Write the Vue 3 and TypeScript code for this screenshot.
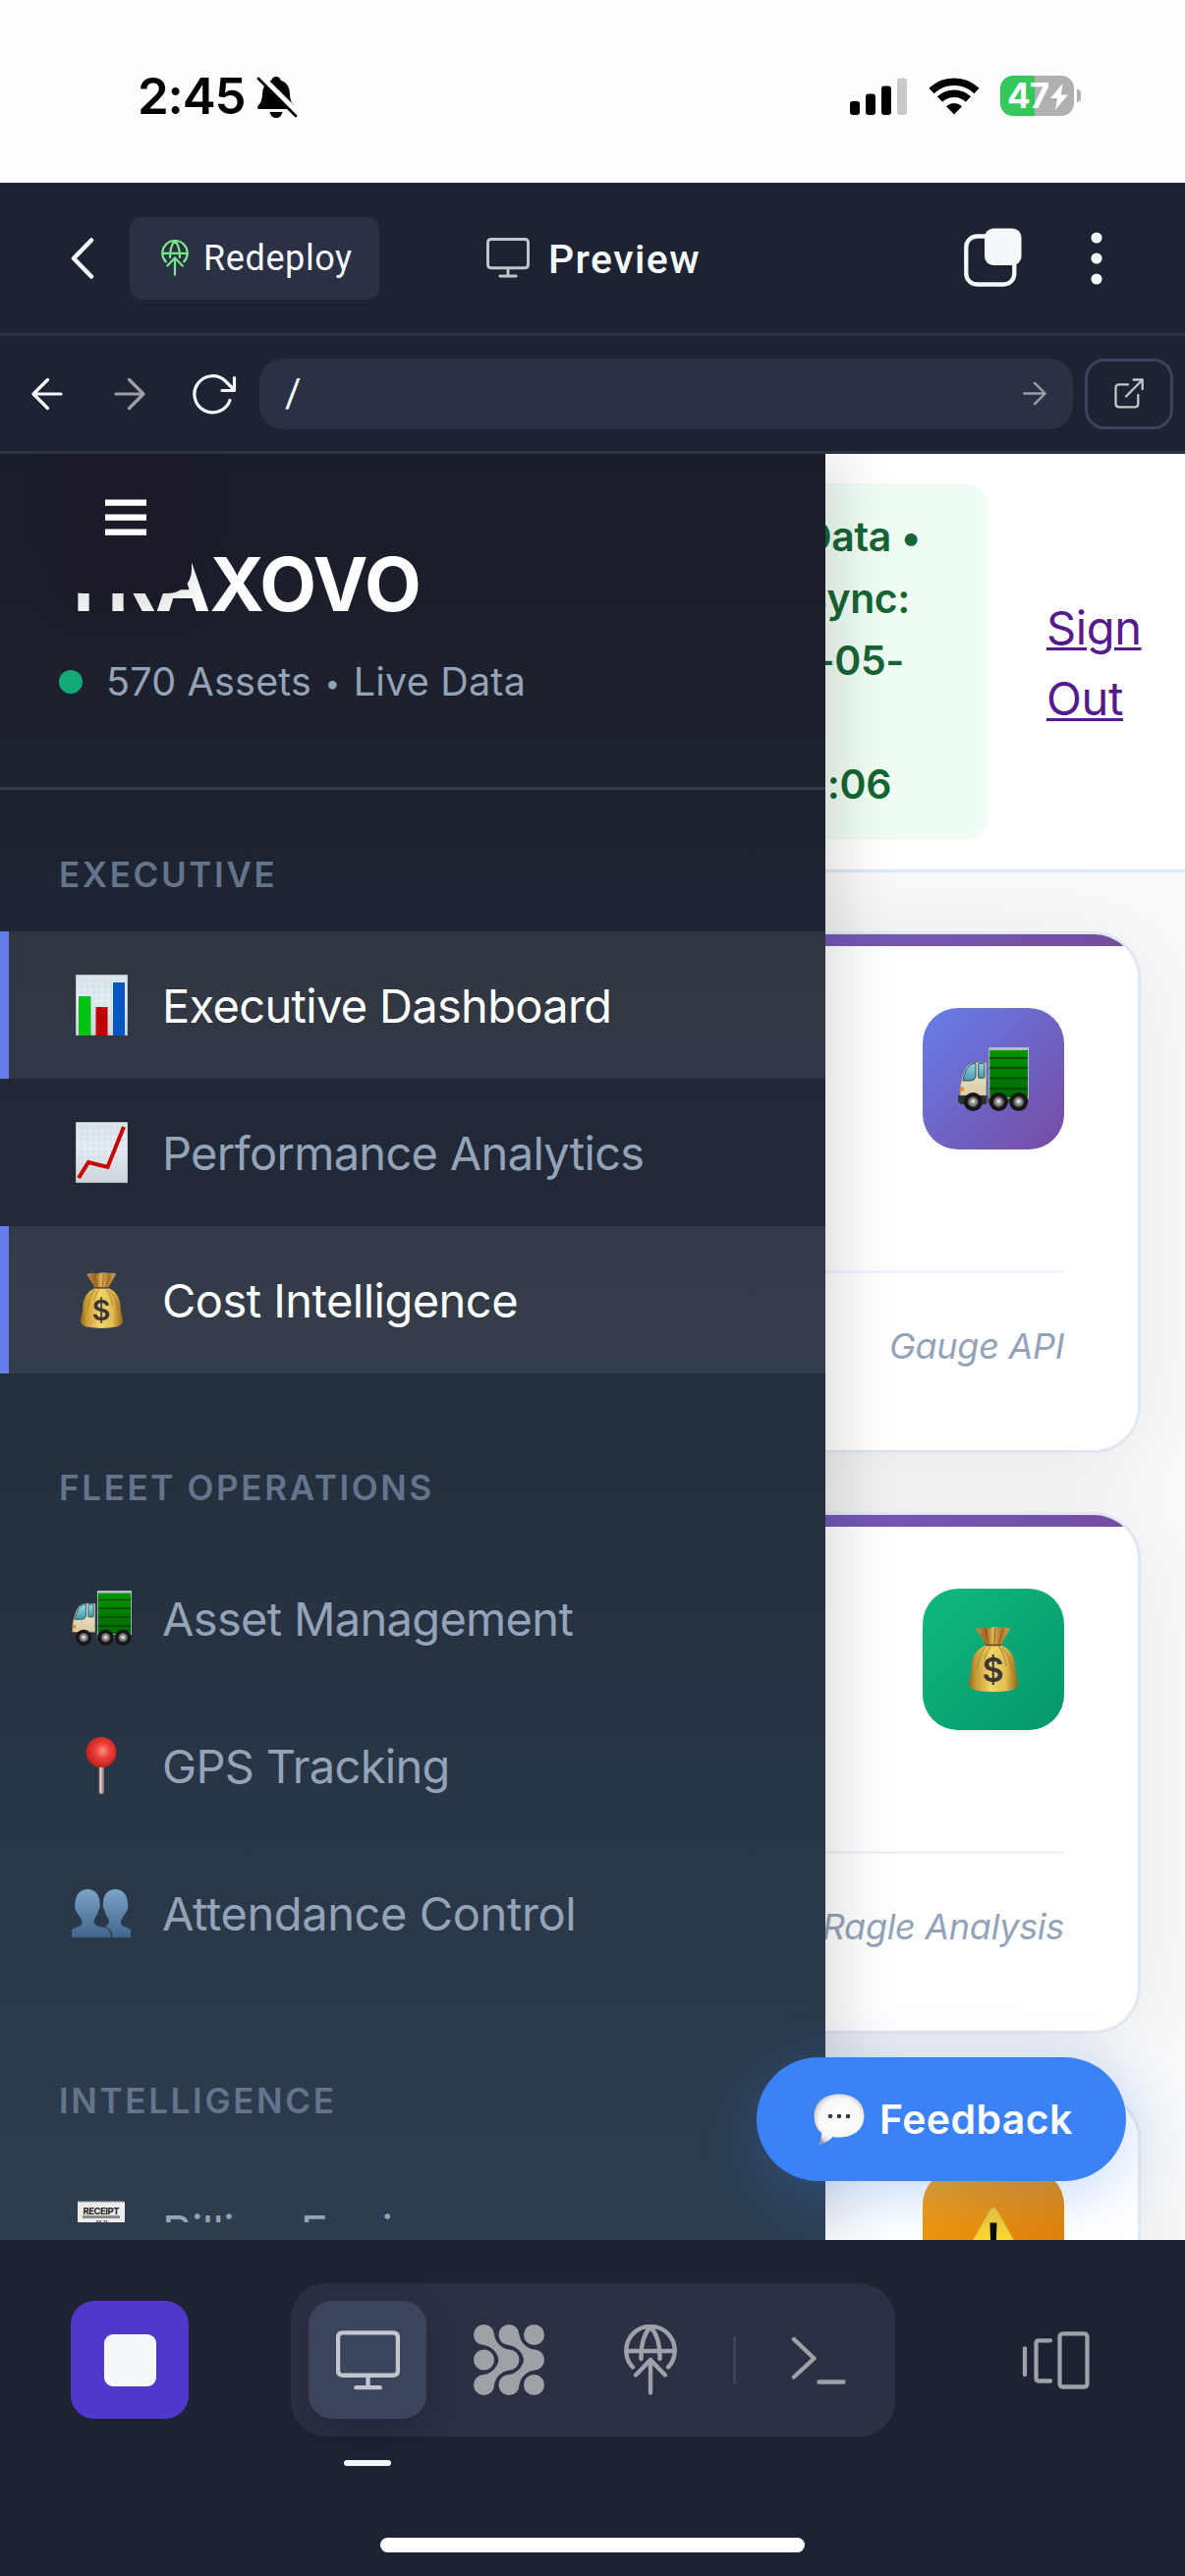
<script setup lang="ts">
interface NavItem {
  label: string
  icon: string
  w: number
  h: number
  tracking: number
  active?: boolean
}
interface NavSection {
  title: string
  items: NavItem[]
}
interface Card {
  icon: string
  tone: string
  source: string
  w: number
  h: number
}

const sections: NavSection[] = [
  {
    title: 'EXECUTIVE',
    items: [
      { label: 'Executive Dashboard', icon: 'bars', w: 53, h: 62, tracking: -0.68, active: true },
      { label: 'Performance Analytics', icon: 'trend', w: 53, h: 62, tracking: -0.68 },
      { label: 'Cost Intelligence', icon: 'bag', w: 43, h: 57, tracking: -0.53, active: true },
    ],
  },
  {
    title: 'FLEET OPERATIONS',
    items: [
      { label: 'Asset Management', icon: 'truck', w: 62, h: 56, tracking: -0.68 },
      { label: 'GPS Tracking', icon: 'pin', w: 32, h: 58, tracking: -0.68 },
      { label: 'Attendance Control', icon: 'people', w: 60, h: 49, tracking: -0.4 },
    ],
  },
  {
    title: 'INTELLIGENCE',
    items: [{ label: 'Billing Engine', icon: 'receipt', w: 48, h: 62, tracking: -0.68 }],
  },
]

const cards: Card[] = [
  { icon: 'truck', tone: 'violet', source: 'Gauge API', w: 72, h: 65 },
  { icon: 'bag', tone: 'green', source: 'Ragle Analysis', w: 50, h: 66 },
  { icon: 'warning', tone: 'amber', source: '', w: 74, h: 66 },
]

// Remaining room on the right of each wrapped line
const syncLines = [
  { text: 'Data •', rest: 68 },
  { text: 'Sync:', rest: 79 },
  { text: '-05-', rest: 85 },
  { text: '', rest: 0 },
  { text: ':06', rest: 98 },
]
</script>

<template>
  <div class="screen">
    <svg class="sprite" width="0" height="0" aria-hidden="true">
      <defs>
        <linearGradient id="gPaper" x1="0" y1="0" x2="0" y2="1">
          <stop offset="0" stop-color="#dbe3e8" /><stop offset=".4" stop-color="#e6eff5" /><stop offset="1" stop-color="#cfd3d7" />
        </linearGradient>
        <linearGradient id="gBag" x1="0" y1="0" x2="1" y2="0">
          <stop offset="0" stop-color="#8f651c" /><stop offset=".14" stop-color="#c79a35" /><stop offset=".45" stop-color="#f2d768" /><stop offset=".75" stop-color="#e3bd50" /><stop offset="1" stop-color="#936418" />
        </linearGradient>
        <linearGradient id="gNeck" x1="0" y1="0" x2="1" y2="0">
          <stop offset="0" stop-color="#b98d4a" /><stop offset=".3" stop-color="#a06a20" /><stop offset=".5" stop-color="#dcb25c" /><stop offset=".75" stop-color="#b07a2a" /><stop offset="1" stop-color="#c9a25d" />
        </linearGradient>
        <linearGradient id="gBox" x1="0" y1="0" x2="0" y2="1">
          <stop offset="0" stop-color="#009400" /><stop offset="1" stop-color="#006800" />
        </linearGradient>
        <linearGradient id="gCab" x1="0" y1="0" x2="0" y2="1">
          <stop offset="0" stop-color="#f0e9d2" /><stop offset="1" stop-color="#d8cba4" />
        </linearGradient>
        <linearGradient id="gGlass" x1="0" y1="0" x2="0" y2="1">
          <stop offset="0" stop-color="#8fdbe8" /><stop offset="1" stop-color="#4797ab" />
        </linearGradient>
        <radialGradient id="gBall" cx=".55" cy=".45" r=".6">
          <stop offset="0" stop-color="#ff8f80" /><stop offset=".4" stop-color="#ee4038" /><stop offset="1" stop-color="#b81a1a" />
        </radialGradient>
        <linearGradient id="gPeople" x1="0" y1="0" x2="0" y2="1">
          <stop offset="0" stop-color="#7ba4c6" /><stop offset="1" stop-color="#42658d" />
        </linearGradient>
        <radialGradient id="gBubble" cx=".52" cy=".5" r=".56">
          <stop offset="0" stop-color="#fff" /><stop offset=".75" stop-color="#f8f8f8" /><stop offset=".93" stop-color="#d2d2d2" /><stop offset="1" stop-color="#9c9c9c" />
        </radialGradient>
        <linearGradient id="gWarn" x1="0" y1="0" x2="0" y2="1">
          <stop offset="0" stop-color="#eec63c" /><stop offset=".5" stop-color="#fdd92c" /><stop offset="1" stop-color="#fcd01c" />
        </linearGradient>
      </defs>

      <symbol id="bars" viewBox="0 0 53 62">
        <rect width="53" height="62" fill="url(#gPaper)" stroke="#98a0a6" stroke-width="1" />
        <path d="M0 6H53M0 12H53M0 18H53M0 24H53M0 30H53M0 36H53M0 42H53M0 48H53M6 0V62M12 0V62M18 0V62M24 0V62M30 0V62M36 0V62M42 0V62M48 0V62" stroke="#c6dbe9" stroke-width=".6" />
        <rect x="3" y="22" width="12.5" height="40" fill="#06c313" />
        <rect x="20.5" y="33" width="12" height="29" fill="#be0000" />
        <rect x="38" y="8" width="12" height="54" fill="#0657c2" />
      </symbol>

      <symbol id="trend" viewBox="0 0 53 62">
        <rect width="53" height="62" fill="url(#gPaper)" stroke="#98a0a6" stroke-width="1" />
        <path d="M0 6H53M0 12H53M0 18H53M0 24H53M0 30H53M0 36H53M0 42H53M0 48H53M6 0V62M12 0V62M18 0V62M24 0V62M30 0V62M36 0V62M42 0V62M48 0V62" stroke="#c6dbe9" stroke-width=".6" />
        <path d="M3 57L13 41L32.5 46L49 5" fill="none" stroke="#c90000" stroke-width="4" />
      </symbol>

      <symbol id="bag" viewBox="0 0 50 66">
        <path d="M7 2Q14 0 20 1.5Q26 -1 34 .8Q38 0 42 2L33 18H17Z" fill="url(#gNeck)" />
        <path d="M17 2L20.500 17M27 1L26 17M35 2L30 17" stroke="#7a4c14" stroke-width="1" opacity=".7" />
        <path d="M17 18.500H33Q45 24 47 36Q47 46 50 56Q51 61 43 64.500Q25 67.500 7 64.500Q-1 61 0 56Q3 46 3 36Q5 24 17 18.500Z" fill="url(#gBag)" />
        <path d="M17 18.500H33" stroke="#5b3a12" stroke-width="1.400" />
        <path d="M17 20Q10 30 8 44M22 20Q17 27 16 33M31 20Q37 30 38 40M34 21Q42 30 44 46" fill="none" stroke="#a9792a" stroke-width="1.500" opacity=".6" />
      </symbol>

      <symbol id="truck" viewBox="0 0 72 65">
        <rect x="30" y="49" width="41" height="8" fill="#444a4c" />
        <rect x="31.300" y="0" width="40.700" height="52" fill="#b4bcc8" />
        <rect x="32.300" y="3" width="38.700" height="48" fill="url(#gBox)" />
        <path d="M32.300 11H71M32.300 21H71M32.300 31.500H71M32.300 42H71" stroke="#033b05" stroke-width="1.300" />
        <path d="M28.800 15.500H17Q9 16 5.500 27L2.500 38L2 50H28.800Z" fill="url(#gCab)" stroke="#8b8876" stroke-width=".7" />
        <path d="M5 34Q8 18 16 16.300H18V30Q17 34 13 34Z" fill="url(#gGlass)" stroke="#2c4f5b" stroke-width="1" />
        <rect x="20.700" y="16.300" width="6.200" height="15" rx="1" fill="url(#gGlass)" stroke="#2c4f5b" stroke-width="1" />
        <circle cx="4.200" cy="42.500" r="2.200" fill="#f28a12" />
        <path d="M0 49H29V58H4Q0 57 0 54Z" fill="#2f3234" />
        <g fill="#161616">
          <circle cx="15.300" cy="55.500" r="9.500" /><circle cx="41.300" cy="55.500" r="9.500" /><circle cx="61.700" cy="55.500" r="9.500" />
        </g>
        <g fill="#8c8c8e" stroke="#4a4a4c" stroke-width="1.300">
          <circle cx="15.300" cy="55.500" r="5" /><circle cx="41.300" cy="55.500" r="5" /><circle cx="61.700" cy="55.500" r="5" />
        </g>
        <g fill="#dcdcdc">
          <circle cx="15.300" cy="55" r="2" /><circle cx="41.300" cy="55" r="2" /><circle cx="61.700" cy="55" r="2" />
        </g>
      </symbol>

      <symbol id="pin" viewBox="0 0 32 58">
        <rect x="13.700" y="26" width="5" height="32" rx="2" fill="#a98f88" />
        <rect x="14.700" y="28" width="1.600" height="29" fill="#e6d3cc" />
        <circle cx="16" cy="15.500" r="15.500" fill="url(#gBall)" />
      </symbol>

      <symbol id="people" viewBox="0 0 60 49">
        <g fill="url(#gPeople)">
          <path d="M16 0C24 0 28.500 6 28.500 14C29.500 17 28 20 27 22C26 27 23 29 22.500 32C22.500 37 28 38 31 38.500C37 39.500 40 42 40 49H0V42C1 38.500 9 39 10.500 35C11 31 8 28 5.500 24C3 20 3 18 3.500 14C4 5 9 0 16 0Z" />
          <path d="M44.500 0C36.500 0 32 6 32 14C31 17 32.500 20 33.500 22C34.500 27 37.500 29 38 32C38 35 36 37 33.500 38.300C38 39.500 41.500 42 41.500 49H60V42C59.500 38.500 51.500 39 50 35C49.500 31 52.500 28 55 24C57.500 20 57.500 18 57 14C56.500 5 51.500 0 44.500 0Z" />
        </g>
      </symbol>

      <symbol id="receipt" viewBox="0 0 48 62">
        <path d="M0 1H48V62H0Z" fill="#ececec" />
        <path d="M0 1H48" stroke="#9a9a9a" stroke-width="2" stroke-dasharray="1.500 1.500" />
        <rect x="5" y="15" width="38" height="3" fill="#8c8c8c" />
      </symbol>

      <symbol id="warning" viewBox="0 0 74 66">
        <path d="M33 3Q37 -3 41 3L73 60Q75 66 69 66H5Q-1 66 1 60Z" fill="url(#gWarn)" stroke="#e0a52e" stroke-width="1" />
        <path d="M33.500 15.500H40.500L39.500 45H34.500Z" fill="#0a0a06" />
        <circle cx="37" cy="54" r="4" fill="#0a0a06" />
      </symbol>

      <symbol id="monitor" viewBox="0 0 64 60">
        <path d="M7 2.300H57Q62 2.300 62 7.300V40Q62 45 57 45H7Q2 45 2 40V7.300Q2 2.300 7 2.300ZM32 45V57M20 57.200H44" fill="none" stroke="currentColor" stroke-width="4.300" stroke-linecap="round" />
      </symbol>

      <symbol id="deploy" viewBox="0 0 54 72">
        <g fill="none" stroke="currentColor" stroke-width="4.400" stroke-linecap="round" stroke-linejoin="round">
          <path d="M9 43.500A24.700 24.700 0 1 1 45 43.500" />
          <path d="M2.500 27H51.500" />
          <path d="M27 2.500Q17 13 17.500 35M27 2.500Q37 13 36.500 35" />
          <path d="M27 36V69.500M12 51.500L27 36L42 51.500" />
        </g>
      </symbol>
    </svg>

    <div class="status">
      <div class="status-left">
        <span class="clock">2:45</span>
        <svg width="42" height="44" viewBox="0 0 42 44">
          <path d="M20 1Q24 1 24.500 4.500Q34 8 34 19Q34 26 38.500 31Q40 34 37 34H3Q0 34 1.500 31Q6 26 6 19Q6 8 15.500 4.500Q16 1 20 1Z" fill="#000" />
          <path d="M13.500 37H26.500Q25 43 20 43Q15 43 13.500 37Z" fill="#000" />
          <path d="M4 1L43 40" stroke="#fdfdfd" stroke-width="7" />
          <path d="M2 3L40 41" stroke="#000" stroke-width="2.800" stroke-linecap="round" />
        </svg>
      </div>
      <div class="status-right">
        <svg width="58" height="38" viewBox="0 0 58 38">
          <rect x="0" y="24" width="10" height="14" rx="3" /><rect x="16" y="16.500" width="10" height="21.500" rx="3" />
          <rect x="32" y="8.500" width="10" height="29.500" rx="3" /><rect x="48" y="0.500" width="10" height="37.500" rx="3" fill="#c9c9c9" />
        </svg>
        <svg class="wifi" width="52" height="38" viewBox="0 0 52 38">
          <g fill="none" stroke="#000" stroke-width="7.500">
            <path d="M3 13.500A33 33 0 0 1 49 13.500" /><path d="M11.500 22A21 21 0 0 1 40.500 22" />
          </g>
          <path d="M26 37.500L18 29.300Q26 22.500 34 29.300Z" />
        </svg>
        <div class="battery">
          <span>47</span>
          <svg width="18" height="27" viewBox="0 0 18 27"><path d="M12.500 0L0 15H7L5 27L18 11.500H11Z" fill="#fff" /></svg>
        </div>
        <i class="nub"></i>
      </div>
    </div>

    <header class="toolbar">
      <svg class="back" width="24" height="42" viewBox="0 0 24 42"><path d="M21 2.500L3 21L21 39.500" fill="none" stroke="#f5f9fc" stroke-width="4.500" stroke-linecap="round" stroke-linejoin="round" /></svg>
      <div class="redeploy">
        <svg width="28" height="37"><use href="#deploy" /></svg>
        <span>Redeploy</span>
      </div>
      <div class="title">
        <svg width="44" height="41"><use href="#monitor" /></svg>
        <span>Preview</span>
      </div>
      <svg class="copy" width="59" height="60" viewBox="0 0 59 60">
        <rect x="2.300" y="8.500" width="49" height="49" rx="11" fill="none" stroke="#f5f9fc" stroke-width="4.300" />
        <rect x="21" y="0.500" width="37.500" height="37.500" rx="9" fill="#f5f9fc" />
      </svg>
      <svg class="dots" width="12" height="54" viewBox="0 0 12 54" fill="#f5f9fc"><circle cx="6" cy="6" r="5.600" /><circle cx="6" cy="27" r="5.600" /><circle cx="6" cy="48" r="5.600" /></svg>
    </header>

    <div class="urlbar">
      <svg class="nav-back" width="32" height="34" viewBox="0 0 32 34"><path d="M30 17H2.500M16.500 2.500L2 17L16.500 31.500" fill="none" stroke="#f5f9fc" stroke-width="3.200" stroke-linecap="round" stroke-linejoin="round" /></svg>
      <svg class="nav-fwd" width="32" height="34" viewBox="0 0 32 34"><path d="M2 17H29.500M15.500 2.500L30 17L15.500 31.500" fill="none" stroke="#9c9fa3" stroke-width="3.200" stroke-linecap="round" stroke-linejoin="round" /></svg>
      <svg class="reload" width="46" height="42" viewBox="0 0 46 42"><path d="M38 27.500A18.600 18.600 0 1 1 33.500 8L42.500 17M42.500 4.500V17.500H30" fill="none" stroke="#f5f9fc" stroke-width="3.200" stroke-linecap="round" stroke-linejoin="round" /></svg>
      <div class="address">
        <span>/</span>
        <svg width="24" height="25" viewBox="0 0 24 25"><path d="M1.300 12.500H22M12 1.800L22.700 12.500L12 23.200" fill="none" stroke="#9c9fa3" stroke-width="2.400" stroke-linecap="round" stroke-linejoin="round" /></svg>
      </div>
      <div class="external">
        <svg width="30" height="31" viewBox="0 0 30 31"><path d="M14 6.300H5Q1.500 6.300 1.500 9.800V26Q1.500 29.300 5 29.300H21Q24.300 29.300 24.300 26V17M12 18.500L28.500 1.800M19.500 1.500H28.700V11" fill="none" stroke="#c3c7cb" stroke-width="2.300" stroke-linecap="round" stroke-linejoin="round" /></svg>
      </div>
    </div>

    <main class="stage">
      <div class="page-head">
        <div class="sync">
          <p v-for="(line, i) in syncLines" :key="i" :style="{ paddingRight: line.rest + 'px' }">{{ line.text }}</p>
        </div>
        <a class="signout">Sign<br>Out</a>
      </div>
      <div class="cards">
        <section v-for="card in cards" :key="card.icon" class="card">
          <div class="card-bar"></div>
          <div class="card-body">
            <div class="card-icon" :class="card.tone">
              <svg :width="card.w" :height="card.h">
                <use :href="'#' + card.icon" />
                <text v-if="card.icon === 'bag'" class="dollar" x="24.5" y="56" font-size="34">$</text>
              </svg>
            </div>
            <div class="card-foot">{{ card.source }}</div>
          </div>
        </section>
      </div>

      <aside class="sidebar">
        <div class="brand">
          <h1>TRAXOVO</h1>
          <div class="live"><i></i><span>570 Assets <b>•</b> Live Data</span></div>
        </div>
        <nav>
          <div v-for="section in sections" :key="section.title" class="section">
            <h2>{{ section.title }}</h2>
            <div v-for="item in section.items" :key="item.label" class="item" :class="{ active: item.active }">
              <span class="item-icon">
                <svg :width="item.w" :height="item.h">
                  <use :href="'#' + item.icon" />
                  <text v-if="item.icon === 'bag'" class="dollar" x="21" y="48.5" font-size="29">$</text>
                  <template v-if="item.icon === 'receipt'">
                    <text class="print" x="24" y="13.5" font-size="9.5" textLength="37">RECEIPT</text>
                    <text class="print" x="24" y="22.5" font-size="4">JUL 17</text>
                  </template>
                </svg>
              </span>
              <span class="item-label" :style="{ letterSpacing: item.tracking + 'px' }">{{ item.label }}</span>
            </div>
          </div>
        </nav>
        <div class="toggle">
          <svg width="42" height="38" viewBox="0 0 42 38" fill="#fff"><rect y="0.500" width="42" height="6.300" /><rect y="15.500" width="42" height="6.300" /><rect y="30.500" width="42" height="6.300" /></svg>
        </div>
      </aside>

      <div class="feedback">
        <svg width="52" height="53" viewBox="0 0 52 53">
          <path d="M26 .5C42 .5 51.500 10 51.500 22.500C51.500 36 41 44.500 26 44.500Q22 44.500 19.500 44Q14 50 4.500 52.500Q8.500 47 8 40Q.5 34 .5 22.500C.5 10 10 .5 26 .5Z" fill="url(#gBubble)" />
          <g fill="#3c3c3c"><circle cx="17" cy="23" r="2.300" /><circle cx="26" cy="23" r="2.300" /><circle cx="35" cy="23" r="2.300" /></g>
        </svg>
        <span>Feedback</span>
      </div>
    </main>

    <footer class="dock">
      <div class="dock-row">
        <div class="stop"><i></i></div>
        <div class="tabs">
          <div class="tab current"><svg width="65" height="61"><use href="#monitor" /></svg></div>
          <div class="tab">
            <svg width="72" height="72" viewBox="0 0 72 72" fill="#9ea2a6">
              <circle cx="10.500" cy="10.500" r="10.500" /><circle cx="36" cy="10.500" r="10.500" /><circle cx="61.500" cy="10.500" r="10.500" />
              <circle cx="10.500" cy="36" r="10.500" /><circle cx="36" cy="36" r="10.500" /><circle cx="61.500" cy="36" r="10.500" />
              <circle cx="10.500" cy="61.500" r="10.500" /><circle cx="36" cy="61.500" r="10.500" /><circle cx="61.500" cy="61.500" r="10.500" />
              <path d="M21 10.500A18 18 0 0 0 36 25.500L25.500 36A18 18 0 0 0 10.500 21Z" />
              <path d="M46.500 10.500A18 18 0 0 0 61.500 25.500L51 36A18 18 0 0 0 36 21Z" />
              <path d="M21 61.500A18 18 0 0 1 36 46.500L25.500 36A18 18 0 0 1 10.500 51Z" />
              <path d="M46.500 61.500A18 18 0 0 1 61.500 46.500L51 36A18 18 0 0 1 36 51Z" />
            </svg>
          </div>
          <div class="tab"><svg width="54" height="72"><use href="#deploy" /></svg></div>
          <i class="sep"></i>
          <div class="tab term"><svg width="56" height="50" viewBox="0 0 56 50"><path d="M3 3L23.500 22.500L3 41.500M28.500 46.500H53.500" fill="none" stroke="#9ea2a6" stroke-width="4.400" stroke-linecap="round" stroke-linejoin="round" /></svg></div>
        </div>
        <svg class="panes" width="69" height="59" viewBox="0 0 69 59">
          <path d="M3 17.500V44M29 9.300H17Q14.500 9.300 14.500 12V47.500Q14.500 50.500 17 50.500H29M42 2.300H63Q66.500 2.300 66.500 5.800V53Q66.500 56.500 63 56.500H42Q38.500 56.500 38.500 53V5.800Q38.500 2.300 42 2.300Z" fill="none" stroke="#9ea2a6" stroke-width="4.300" stroke-linecap="round" />
        </svg>
      </div>
      <i class="marker"></i>
      <i class="home"></i>
    </footer>
  </div>
</template>

<style>
body { margin: 0; background: #1d2332; }
</style>

<style scoped>
* { box-sizing: border-box; }
svg { display: block; flex: none; }
.sprite { position: absolute; }
h1, h2, p { margin: 0; }
.screen { position: relative; width: 1206px; height: 2622px; display: flex; flex-direction: column; overflow: hidden; background: #1d2332; font-family: Inter, "Noto Sans", sans-serif; }
.dollar { font-family: Inter, sans-serif; font-weight: 600; text-anchor: middle; fill: #3d3538; }
.print { font-family: Inter, sans-serif; font-weight: 700; text-anchor: middle; fill: #222; }

.status { height: 186px; flex: none; background: #fdfdfd; display: flex; justify-content: space-between; padding: 77px 106px 0 140px; }
.status-left, .status-right { display: flex; height: 43px; }
.clock { font-size: 51px; font-weight: 600; line-height: 42px; letter-spacing: -1.2px; width: 121px; color: #000; }
.status-right svg { margin-top: 1.500px; }
.status-right .wifi { margin-left: 22px; margin-right: 21px; }
.battery { width: 75px; height: 41px; border-radius: 13px; background: linear-gradient(90deg, #34c759 0 35px, #b0b0b0 35px); display: flex; align-items: center; padding-left: 7px; color: #fff; font-weight: 700; font-size: 35px; letter-spacing: -0.8px; line-height: 41px; }
.battery span { width: 44px; }
.status-right .battery svg { margin-top: 1px; }
.nub { width: 4px; height: 13px; margin: 14px 0 0 3px; border-radius: 0 4px 4px 0; background: #b0b0b0; }

.toolbar { height: 156px; flex: none; border-bottom: 3px solid #2b3245; display: flex; align-items: center; color: #f5f9fc; font-family: Roboto, "Noto Sans", sans-serif; }
.back { margin-left: 72px; }
.redeploy { width: 254px; height: 84px; margin-left: 36px; border-radius: 12px; background: #2b3044; display: flex; align-items: center; padding-left: 32px; font-size: 36px; letter-spacing: 0.6px; }
.redeploy svg { color: #76e78a; margin-right: 15px; }
.title { width: 486px; margin-left: 109px; display: flex; align-items: center; font-size: 41px; font-weight: 500; letter-spacing: 1.4px; }
.title svg { color: #c3c7cb; margin-right: 19px; }
.title span { padding-top: 2px; }
.copy { margin-top: -1px; }
.dots { margin-left: 70px; }

.urlbar { height: 120px; flex: none; border-bottom: 3px solid #2b3245; display: flex; align-items: center; }
.nav-back { margin-left: 32px; }
.nav-fwd { margin-left: 52px; }
.reload { margin-left: 48px; }
.address { width: 828px; height: 72px; margin-left: 22px; border-radius: 24px; background: #2b3044; display: flex; align-items: center; justify-content: space-between; padding: 0 27px 0 26px; color: #f5f9fc; font-family: Roboto, sans-serif; font-size: 40px; }
.external { width: 90px; height: 72px; margin-left: 12px; border: 3px solid #3c445c; border-radius: 20px; display: flex; align-items: center; justify-content: center; }

.stage { position: relative; height: 1818px; flex: none; overflow: hidden; background: #f8fafc; }
.page-head { height: 426px; background: #fff; border-bottom: 3px solid #e2e8f0; display: flex; align-items: center; justify-content: flex-end; }
.sync { width: 300px; height: 363px; border-radius: 24px; background: #f0fdf4; padding-top: 23px; color: #166534; font-size: 41px; font-weight: 600; letter-spacing: -0.4px; text-align: right; }
.sync p { height: 63px; line-height: 63px; white-space: nowrap; }
.signout { width: 141px; margin-left: 60px; padding-top: 2px; color: #551a8b; font-size: 47px; line-height: 72px; letter-spacing: -0.4px; text-decoration: underline; text-decoration-thickness: 3px; text-underline-offset: 3px; }
.cards { padding: 60px 45px 0; display: flex; flex-direction: column; gap: 60px; }
.card { height: 531px; flex: none; border: 3px solid #e2e8f0; border-radius: 48px; background: #fff; overflow: hidden; box-shadow: 0 12px 96px rgba(0, 0, 0, 0.08); }
.card-bar { height: 12px; background: linear-gradient(90deg, #667eea, #764ba2); }
.card-body { padding: 63px 75px 0; display: flex; flex-direction: column; align-items: flex-end; }
.card-icon { width: 144px; height: 144px; border-radius: 36px; display: flex; align-items: center; justify-content: center; }
.violet { background: linear-gradient(135deg, #667eea, #764ba2); }
.green { background: linear-gradient(135deg, #10b981, #059669); }
.amber { background: linear-gradient(135deg, #f59e0b, #d97706); }
.card-foot { width: 100%; margin-top: 123px; border-top: 3px solid #f1f5f9; padding-top: 47px; text-align: right; font-size: 36px; line-height: 54px; letter-spacing: -0.3px; font-style: italic; color: #94a3b8; }

.sidebar { position: absolute; left: 0; top: 0; width: 840px; height: 1818px; background: linear-gradient(180deg, #1a1c28, #2d3e50); box-shadow: 12px 0 60px rgba(0, 0, 0, 0.15); }
.brand { height: 342px; border-bottom: 3px solid rgba(255, 255, 255, 0.1); padding: 85px 60px 0; }
.brand h1 { font-size: 75px; font-weight: 700; line-height: 96px; color: #fff; letter-spacing: -0.6px; }
.live { display: flex; align-items: center; height: 60px; margin-top: 21px; color: #94a3b8; font-size: 39.500px; letter-spacing: 0.2px; white-space: nowrap; }
.live i { width: 24px; height: 24px; margin-right: 24px; border-radius: 50%; background: #12aa79; }
.live b { display: inline-block; width: 20px; font-size: 27px; font-weight: 400; line-height: 40px; text-align: center; vertical-align: 3px; }
nav { height: 1458px; overflow: hidden; }
.section { padding-top: 62px; }
.section + .section { padding-top: 92px; }
.section h2 { height: 82px; line-height: 48px; font-size: 35px; font-weight: 600; letter-spacing: 2.65px; color: #64748b; padding-left: 60px; }
.item { height: 150px; border-left: 9px solid transparent; display: flex; align-items: center; color: #94a3b8; }
.item.active { color: #fff; border-left-color: #667eea; background: rgba(255, 255, 255, 0.08); background-clip: padding-box; }
.item-icon { width: 72px; margin-left: 58px; display: flex; justify-content: center; }
.item-label { margin-left: 26px; font-size: 47px; white-space: nowrap; }
.toggle { position: absolute; left: 60px; top: -24px; width: 135px; height: 166px; border-radius: 24px; background: #1a1b27; box-shadow: 0 12px 36px rgba(0, 0, 0, 0.15); display: flex; justify-content: center; padding: 70px 0 0 1px; }

.feedback { position: absolute; left: 770px; top: 1632px; width: 376px; height: 126px; border-radius: 63px; background: #3b82f6; box-shadow: 0 12px 60px rgba(59, 130, 246, 0.3); display: flex; align-items: center; padding-left: 58px; color: #fff; font-size: 41px; font-weight: 600; letter-spacing: 0.4px; }
.feedback span { margin-left: 15px; }

.dock { flex: 1; display: flex; flex-direction: column; }
.dock-row { height: 156px; margin-top: 44px; display: flex; align-items: center; }
.stop { width: 120px; height: 120px; margin-left: 72px; border-radius: 24px; background: #5138cb; display: flex; align-items: center; justify-content: center; }
.stop i { width: 53px; height: 53px; border-radius: 9px; background: #f5f9fc; }
.tabs { width: 615px; height: 156px; margin-left: 104px; padding-left: 18px; border-radius: 36px; background: #2b3044; display: flex; align-items: center; color: #9ea2a6; }
.tab { width: 120px; height: 120px; flex: none; margin-right: 24px; border-radius: 24px; display: flex; align-items: center; justify-content: center; }
.tab.current { background: #3c445c; color: #c3c7cb; box-shadow: 0 12px 30px rgba(15, 18, 32, 0.3); }
.sep { width: 3px; height: 48px; flex: none; background: #3c445c; }
.tab.term { margin: 2px 0 0 24px; }
.panes { margin-left: 129px; }
.marker { width: 48px; height: 6px; margin: 24px 0 0 350px; border-radius: 3px; background: #f5f9fc; }
.home { width: 432px; height: 15px; margin: 73px auto 0; border-radius: 8px; background: #fff; }
</style>
